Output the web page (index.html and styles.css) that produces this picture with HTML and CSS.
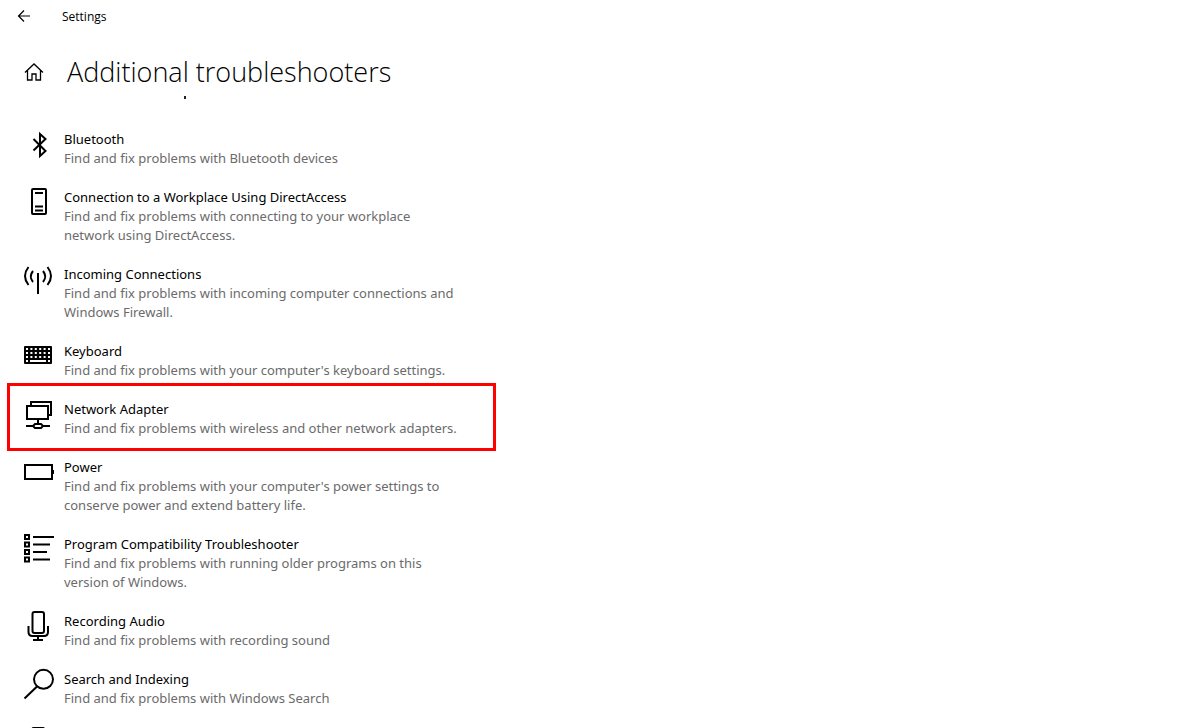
FILE: index.html
```html
<!DOCTYPE html>
<html lang="en">
<head>
<meta charset="utf-8">
<title>Settings</title>
<link rel="stylesheet" href="styles.css">
</head>
<body>
<div class="window">
  <header class="titlebar">
    <button class="icon-button back" aria-label="Back"><svg width="14" height="14" viewBox="0 0 14 14"><path d="M13 7H1.5M7 1.5L1.5 7L7 12.5"/></svg></button>
    <span class="app-name">Settings</span>
  </header>
  <div class="page-head">
    <button class="icon-button home" aria-label="Home"><svg width="20" height="20" viewBox="0 0 20 20"><path d="M1 10.5L10 2L19 10.5M3.5 8.5V18H8V12H12V18H16.5V8.5"/></svg></button>
    <h1>Additional troubleshooters</h1>
  </div>
  <main class="scroller">
    <div class="scrolled-edge"></div>
    <ul class="list">
      <li><button class="item">
        <svg class="icon" viewBox="0 0 32 32"><path d="M11.5 10L23.5 22L18 27V5L23.5 10L11.5 21.5"/></svg>
        <span class="text"><span class="name">Bluetooth</span><span class="desc">Find and fix problems with Bluetooth devices</span></span>
      </button></li>
      <li><button class="item">
        <svg class="icon" viewBox="0 0 32 32"><rect x="10" y="2" width="14" height="25" rx="1"/><path d="M13 6H21M13 19.5H21M13 23.5H21"/></svg>
        <span class="text"><span class="name">Connection to a Workplace Using DirectAccess</span><span class="desc">Find and fix problems with connecting to your workplace network using DirectAccess.</span></span>
      </button></li>
      <li><button class="item">
        <svg class="icon" viewBox="0 0 32 32"><path d="M16 9V30M6.5 3Q-.5 12 6.5 21M25.5 3Q32.5 12 25.5 21M11 7Q6.5 12.5 11 18M21 7Q25.5 12.5 21 18"/></svg>
        <span class="text"><span class="name">Incoming Connections</span><span class="desc">Find and fix problems with incoming computer connections and Windows Firewall.</span></span>
      </button></li>
      <li><button class="item">
        <svg class="icon" viewBox="0 0 32 32"><rect class="solid" x="2" y="5" width="28" height="18" rx="1"/><path class="keys" d="M4 8H28M4 12H28M4 16H28"/><path class="space" d="M4 20H6M8 20H24M26 20H28"/></svg>
        <span class="text"><span class="name">Keyboard</span><span class="desc">Find and fix problems with your computer's keyboard settings.</span></span>
      </button></li>
      <li><button class="item highlighted">
        <svg class="icon" viewBox="0 0 32 32"><path d="M9 6V3H29V16H26M5 7H26V20H5ZM16 20V24M4 27H11M21 27H28M13 25H19L21 27L19 29H13L11 27Z"/></svg>
        <span class="text"><span class="name">Network Adapter</span><span class="desc">Find and fix problems with wireless and other network adapters.</span></span>
      </button></li>
      <li><button class="item">
        <svg class="icon" viewBox="0 0 32 32"><rect x="3" y="8" width="27" height="14"/><path d="M31 13V17"/></svg>
        <span class="text"><span class="name">Power</span><span class="desc">Find and fix problems with your computer's power settings to conserve power and extend battery life.</span></span>
      </button></li>
      <li><button class="item">
        <svg class="icon" viewBox="0 0 32 32"><path d="M3 1H7V5H3ZM3 8.5H7V12.5H3ZM3 16H7V20H3ZM3 23.5H7V27.5H3ZM11 3H32M11 10.5H28M11 18H25M11 25.5H28"/></svg>
        <span class="text"><span class="name">Program Compatibility Troubleshooter</span><span class="desc">Find and fix problems with running older programs on this version of Windows.</span></span>
      </button></li>
      <li><button class="item">
        <svg class="icon" viewBox="0 0 32 32"><rect x="10.5" y="1" width="11.5" height="21" rx="2"/><path d="M6.5 15V21Q6.5 25 10.5 25H22Q26 25 26 21V15M16 25V29M11 29H21"/></svg>
        <span class="text"><span class="name">Recording Audio</span><span class="desc">Find and fix problems with recording sound</span></span>
      </button></li>
      <li><button class="item">
        <svg class="icon" viewBox="0 0 32 32"><circle cx="21.5" cy="10.3" r="9.5"/><path d="M15 17.5L2.5 29.5"/></svg>
        <span class="text"><span class="name">Search and Indexing</span><span class="desc">Find and fix problems with Windows Search</span></span>
      </button></li>
      <li><button class="item" aria-label="Next troubleshooter">
        <svg class="icon" viewBox="0 0 32 32"><rect x="10.5" y="1" width="11.5" height="21" rx="1"/></svg>
      </button></li>
    </ul>
  </main>
</div>
</body>
</html>
```
FILE: styles.css
```css
* { box-sizing: border-box; }
body {
  margin: 0;
  background: #fff;
  color: #000;
  font-family: "Open Sans", "Noto Sans", sans-serif;
}
button {
  border: 0;
  padding: 0;
  background: none;
  color: inherit;
  font: inherit;
  text-align: left;
}
svg {
  display: block;
  overflow: visible;
  fill: none;
  stroke: #000;
}
.window {
  height: 100vh;
  display: flex;
  flex-direction: column;
  overflow: hidden;
}
.titlebar {
  display: flex;
  align-items: center;
  height: 32px;
  padding-left: 17px;
  gap: 31px;
  font-size: 12px;
}
.back svg { stroke-width: 1.2; }
.home svg { stroke-width: 1.3; }
.page-head {
  display: flex;
  align-items: center;
  height: 64px;
  padding: 16px 0 0 24px;
  gap: 23px;
}
h1 {
  margin: 0;
  font-size: 27px;
  line-height: 48px;
  font-weight: 300;
}
.scroller {
  flex: 1;
  min-height: 0;
  overflow: hidden;
}
.scrolled-edge {
  width: 2px;
  height: 3px;
  margin: 0 0 21px 184px;
  background: #222;
}
.list {
  list-style: none;
  margin: 0;
  padding: 0 0 0 7px;
}
.item {
  position: relative;
  display: flex;
  align-items: flex-start;
  gap: 10px;
  width: 100%;
  max-width: 489px;
  padding: 9px 36px 10px 15px;
}
.icon {
  flex: none;
  width: 32px;
  height: 32px;
  stroke-width: 2;
}
.solid { fill: #000; stroke: none; }
.keys { stroke: #fff; stroke-dasharray: 2 2.4; }
.space { stroke: #fff; }
.text {
  flex: 1;
  padding-top: 1px;
  font-family: "Noto Sans", "Open Sans", sans-serif;
}
.name, .desc {
  display: block;
  font-size: 13px;
  line-height: 19px;
}
.desc { color: #6b6b6b; }
.highlighted::after {
  content: "";
  position: absolute;
  inset: -7px 0 -3px;
  border: 3px solid #f00;
}
```
